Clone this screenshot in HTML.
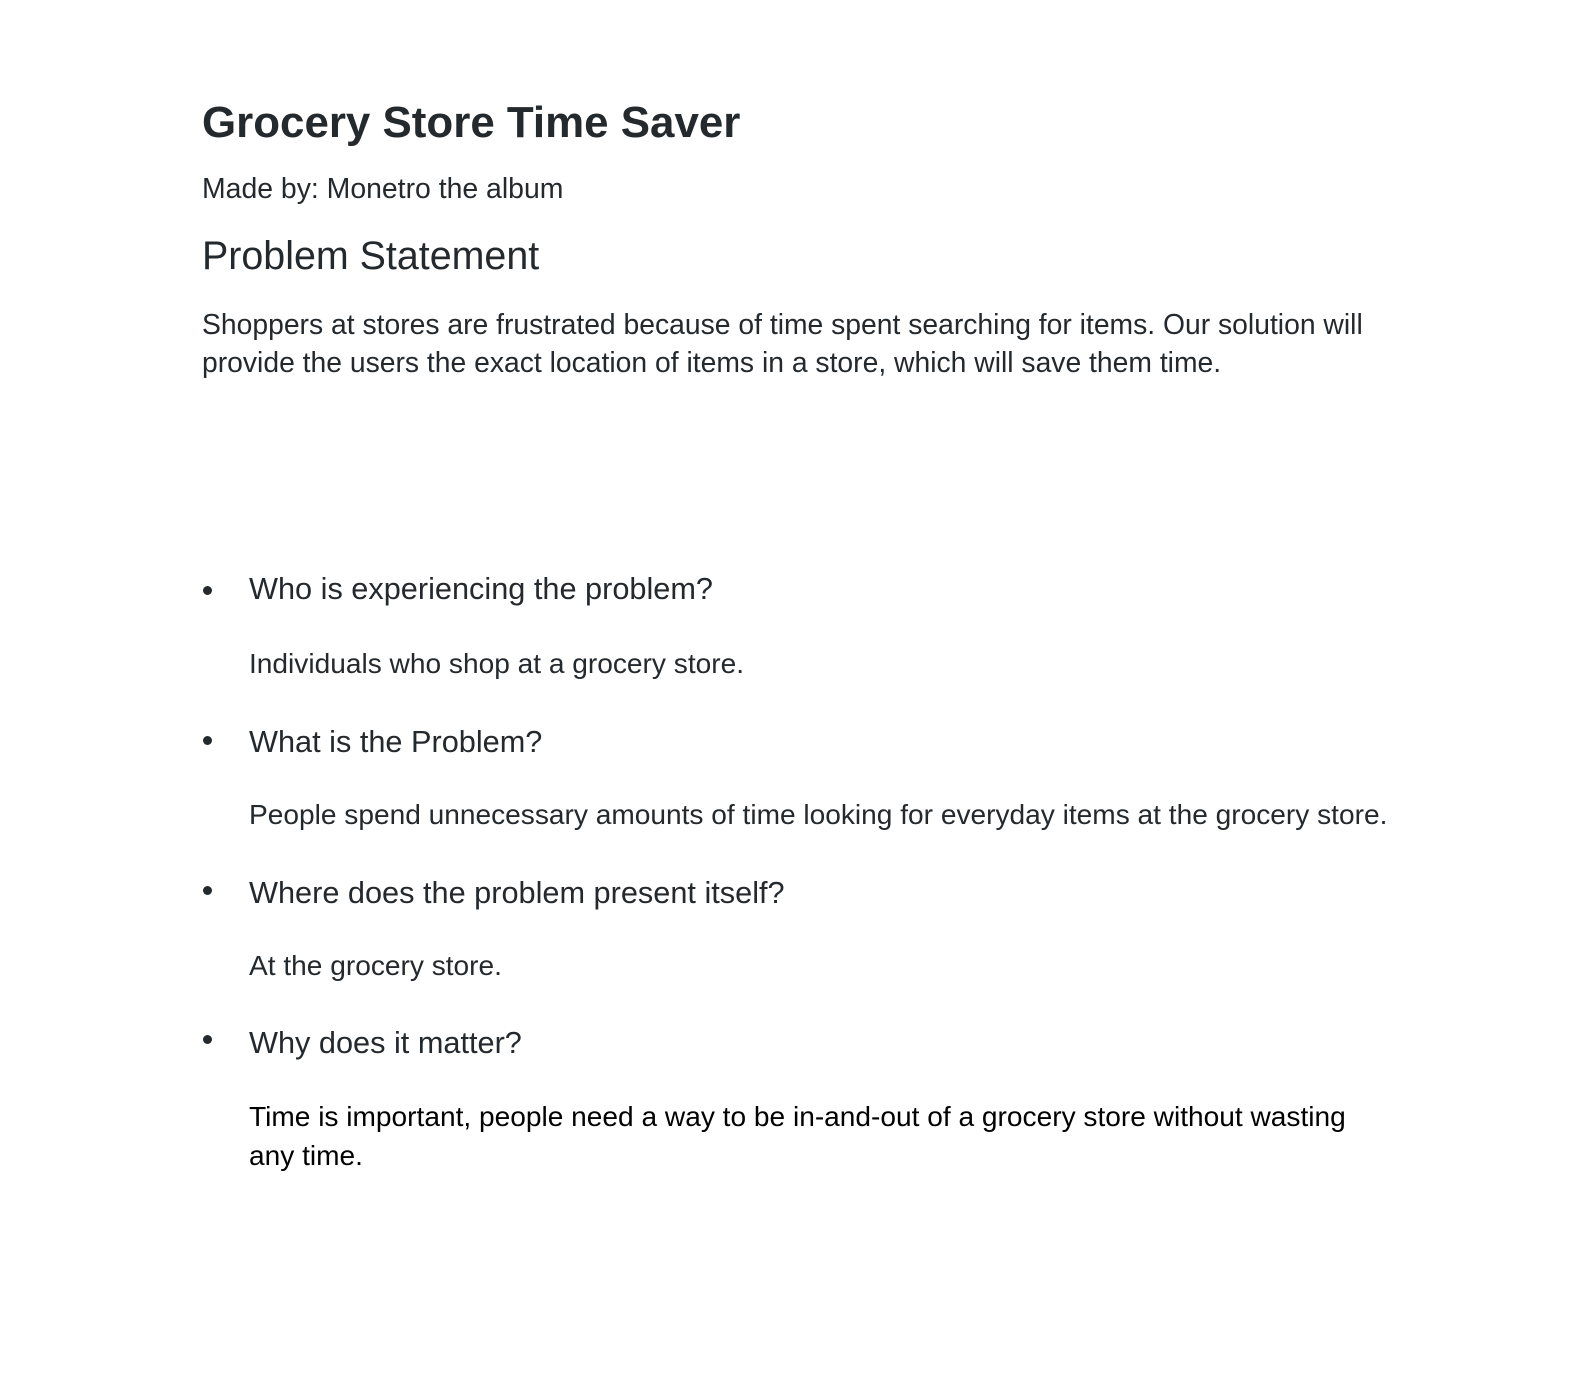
<!DOCTYPE html>
<html><head><meta charset="utf-8"><style>
body{margin:0;width:1586px;height:1374px;background:#fff;font-family:"Liberation Sans",sans-serif;color:#24292e;position:relative;overflow:hidden}
.l{position:absolute;left:202px;white-space:nowrap;line-height:40px}
.i{left:249px}
.b{position:absolute;left:203px;width:9px;height:9px;border-radius:50%;background:#24292e}
</style></head><body>
<div class="l" style="top:101px;font-size:43.9px;font-weight:bold;line-height:44px">Grocery Store Time Saver</div>
<div class="l" style="top:169px;font-size:28.4px">Made by: Monetro the album</div>
<div class="l" style="top:236px;font-size:39.4px">Problem Statement</div>
<div class="l" style="top:304px;font-size:28.3px">Shoppers at stores are frustrated because of time spent searching for items. Our solution will</div>
<div class="l" style="top:342px;font-size:28.3px">provide the users the exact location of items in a store, which will save them time.</div>

<div class="b" style="top:586px"></div>
<div class="l i" style="top:569px;font-size:30.7px">Who is experiencing the problem?</div>
<div class="l i" style="top:644px;font-size:28.1px">Individuals who shop at a grocery store.</div>

<div class="b" style="top:736px"></div>
<div class="l i" style="top:722px;font-size:30.7px">What is the Problem?</div>
<div class="l i" style="top:795px;font-size:28.1px">People spend unnecessary amounts of time looking for everyday items at the grocery store.</div>

<div class="b" style="top:886px"></div>
<div class="l i" style="top:873px;font-size:30.7px">Where does the problem present itself?</div>
<div class="l i" style="top:946px;font-size:28.1px">At the grocery store.</div>

<div class="b" style="top:1035px"></div>
<div class="l i" style="top:1023px;font-size:30.7px">Why does it matter?</div>
<div class="l i" style="top:1097px;font-size:28.1px;color:#000">Time is important, people need a way to be in-and-out of a grocery store without wasting</div>
<div class="l i" style="top:1136px;font-size:28.1px;color:#000">any time.</div>
</body></html>
